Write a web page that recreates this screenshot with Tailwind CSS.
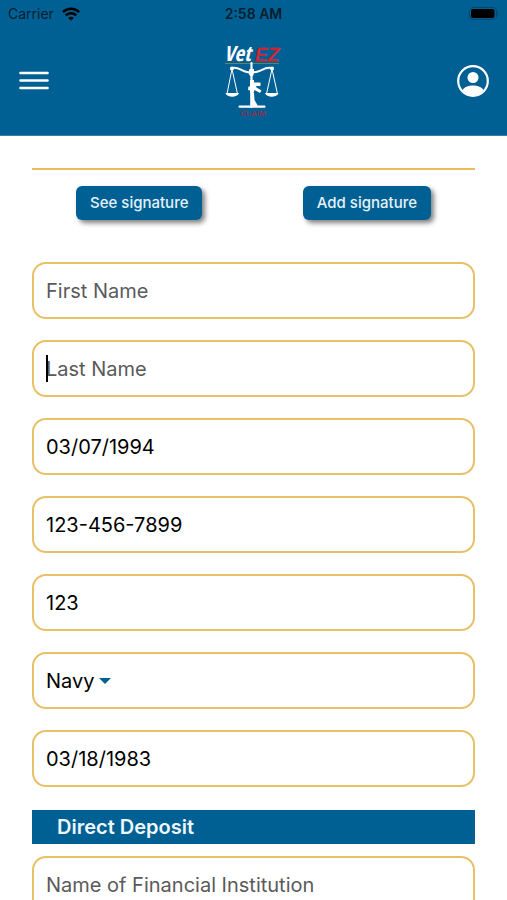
<!DOCTYPE html>
<html lang="en">

<head>
  <meta charset="UTF-8">
  <meta name="viewport" content="width=device-width, initial-scale=1.0">
  <title>VetEZ Claim</title>
  <script src="https://cdn.jsdelivr.net/npm/@tailwindcss/browser@4"></script>
</head>

<body class="flex h-screen flex-col overflow-hidden bg-white font-['Inter',sans-serif] text-black">

  <header class="shrink-0 border-b border-[#3a7ba5] bg-[#006094]">
    <!-- Status bar -->
    <div class="grid h-7 grid-cols-3 items-center px-2 text-sm text-[#06202f]">
      <div class="flex items-center gap-2">
        <span>Carrier</span>
        <svg class="h-[14px] w-[18px]" viewBox="0 0 18 14" fill="none" stroke="#000" stroke-width="2.5">
          <path d="M.9 5.1C5.4.7 12.6.7 17.1 5.1" />
          <path d="M3.8 8.3c2.9-2.8 7.5-2.8 10.4 0" />
          <path d="M9 13.6 6.2 10.9c1.6-1.4 4-1.4 5.6 0z" fill="#000" stroke="none" />
        </svg>
      </div>
      <span class="text-center font-semibold">2:58 AM</span>
      <svg class="h-[14px] w-[30px] justify-self-end" viewBox="0 0 30 14">
        <rect x=".5" y=".5" width="27" height="12" rx="3.5" fill="none" stroke="#00486f" />
        <rect x="2" y="2" width="23.500" height="9" rx="2" fill="#000" />
        <path d="M28.500 4.500c1.400.6 1.400 3.400 0 4z" fill="#00486f" />
      </svg>
    </div>

    <!-- Nav bar -->
    <div class="flex h-[107px] items-center justify-between px-4 pb-0.5">
      <button type="button" aria-label="Menu" class="flex w-9 justify-center">
        <svg class="h-5 w-[30px]" viewBox="0 0 30 20" stroke="#fff" stroke-width="2.6" stroke-linecap="round">
          <path d="M1.5 2h27M1.5 9.5h27M1.5 17h27" />
        </svg>
      </button>

      <svg class="h-20 w-16 overflow-visible" viewBox="0 0 64 80" role="img" aria-label="VetEZ Claim">
        <g font-style="italic">
          <text x="2" y="20" font-family="'Open Sans Condensed','Liberation Sans Narrow',sans-serif" font-size="21" font-weight="700" fill="#fff">Vet</text>
          <text x="33" y="20" font-family="'Liberation Sans',sans-serif" font-size="19" fill="#e01e2b" stroke="#e01e2b" stroke-width=".5">EZ</text>
        </g>
        <path d="M3 22.500h54" stroke="#67805f" stroke-width="1.200" />
        <g fill="none" stroke="#fff" stroke-linecap="round">
          <path d="M29.500 22v44" stroke-width="2.200" />
          <path d="M9 27.500c6-2.500 9 1.500 14 3 4 1.200 9 1.200 13 0 5-1.500 8-5.500 15-3" stroke-width="2" />
          <path d="M10 28 5 53M10 28l5.500 25M50 28l-5.500 25M50 28l5.500 25" stroke-width="1" />
        </g>
        <g fill="#fff">
          <circle cx="10" cy="27.500" r="2" />
          <circle cx="50" cy="27.500" r="2" />
          <path d="M3.500 52h13.500c-1.500 5-12 5-13.500 0zM43 52h13.500c-1.500 5-12 5-13.500 0z" />
          <path d="M27.500 28h4.500v4l-1 3h-3L26.500 32z" />
          <!-- rifle across the pillar -->
          <path d="M28 39h4v2.500h6.500V45H34l.5 1.500 5 3-1.500 2.500-5.500-3-1 3h-3.500v-2.500l-2-.5.5-3.500h1.500z" />
          <path d="M28.500 52h3.500l.5 7 4 7h-8z" />
          <rect x="16.500" y="64.500" width="27" height="2.200" rx="1" />
        </g>
        <text x="31" y="75" text-anchor="middle" font-family="'Liberation Sans',sans-serif" font-weight="700" font-size="8" fill="#8a3050">CLAIM</text>
      </svg>

      <button type="button" aria-label="Profile" class="flex w-9 justify-center">
        <svg class="h-8 w-8" viewBox="0 0 32 32" fill="#fff">
          <circle cx="16" cy="16" r="14.800" fill="none" stroke="#fff" stroke-width="2.200" />
          <circle cx="16" cy="12.500" r="5.500" />
          <path d="M5.500 25C8 21.500 12 20.500 16 20.500S24 21.500 26.500 25C24 28.500 20 30.500 16 30.500S8 28.500 5.500 25z" />
        </svg>
      </button>
    </div>
  </header>

  <main class="grow overflow-y-auto px-8 pt-8 [scrollbar-width:none]">
    <form class="border-t-2 border-[#e9bd5c]">
      <div class="mt-4 flex justify-between px-11">
        <button type="button" class="h-[34px] rounded-md bg-[#006094] px-[14px] text-[15px] font-medium text-[#e4f2fa] shadow-[3px_3px_5px_rgba(0,0,0,0.5)]">See signature</button>
        <button type="button" class="h-[34px] rounded-md bg-[#006094] px-[14px] text-[15px] font-medium text-[#e4f2fa] shadow-[3px_3px_5px_rgba(0,0,0,0.5)]">Add signature</button>
      </div>

      <div class="mt-[42px] flex flex-col gap-[21px] text-xl">
        <input type="text" aria-label="First Name" placeholder="First Name" class="h-[57px] rounded-[14px] border-2 border-[#e9c067] px-3 placeholder:text-[#5a5a5a]">
        <div class="relative flex">
          <input type="text" aria-label="Last Name" placeholder="Last Name" class="h-[57px] w-full rounded-[14px] border-2 border-[#e9c067] px-3 placeholder:text-[#5a5a5a]">
          <!-- text cursor -->
          <span class="absolute top-[15px] left-[14px] h-[27px] w-0.5 bg-black"></span>
        </div>
        <input type="text" aria-label="Date of birth" value="03/07/1994" class="h-[57px] rounded-[14px] border-2 border-[#e9c067] px-3">
        <input type="tel" aria-label="Phone number" value="123-456-7899" class="h-[57px] rounded-[14px] border-2 border-[#e9c067] px-3">
        <input type="text" aria-label="File number" value="123" class="h-[57px] rounded-[14px] border-2 border-[#e9c067] px-3">
        <div class="flex h-[57px] items-center gap-1 rounded-[14px] border-2 border-[#e9c067] px-3">
          <select aria-label="Branch of service" class="field-sizing-content appearance-none">
            <option>Navy</option>
          </select>
          <svg class="h-1.5 w-3" viewBox="0 0 12 6" fill="#006094">
            <path d="M0 0h12L6 6z" />
          </svg>
        </div>
        <input type="text" aria-label="Service date" value="03/18/1983" class="h-[57px] rounded-[14px] border-2 border-[#e9c067] px-3">
      </div>

      <h2 class="mt-[23px] bg-[#006094] px-[25px] text-xl leading-[34px] font-semibold text-[#eef7fc]">Direct Deposit</h2>

      <div class="mt-3 flex flex-col gap-[21px] pb-8 text-xl">
        <input type="text" aria-label="Name of Financial Institution" placeholder="Name of Financial Institution" class="h-[57px] rounded-[14px] border-2 border-[#e9c067] px-3 placeholder:text-[#5a5a5a]">
      </div>
    </form>
  </main>

</body>

</html>
